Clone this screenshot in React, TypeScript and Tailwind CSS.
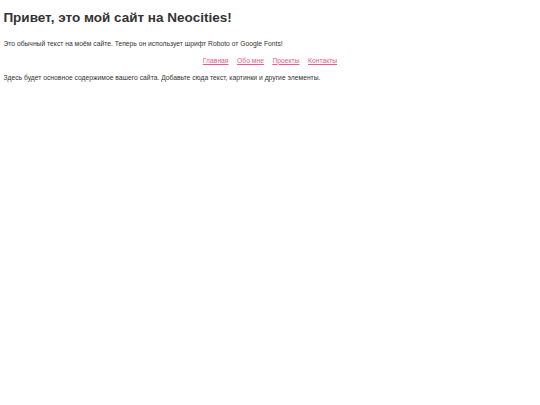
export default function App() {
  const links = ['Главная', 'Обо мне', 'Проекты', 'Контакты'];
  return (
    <div
      className="min-h-screen bg-white px-[3.4px] py-px text-[6.75px] leading-[1.6] text-[#333333]"
      style={{ fontFamily: '"Liberation Sans", Arial, sans-serif' }}
    >
      <h1 className="mt-[6px] mb-[10px] text-[13.5px] font-bold leading-[1.6]">
        Привет, это мой сайт на Neocities!
      </h1>
      <p className="my-[6.25px]">
        Это обычный текст на моём сайте. Теперь он использует шрифт Roboto от Google Fonts!
      </p>
      <nav className="my-[6.25px] flex justify-center gap-[8.5px]">
        {links.map((l) => (
          <a key={l} href="#" className="text-[#e85a88] underline">
            {l}
          </a>
        ))}
      </nav>
      <p className="my-[6.25px]">
        Здесь будет основное содержимое вашего сайта. Добавьте сюда текст, картинки и другие элементы.
      </p>
    </div>
  );
}
